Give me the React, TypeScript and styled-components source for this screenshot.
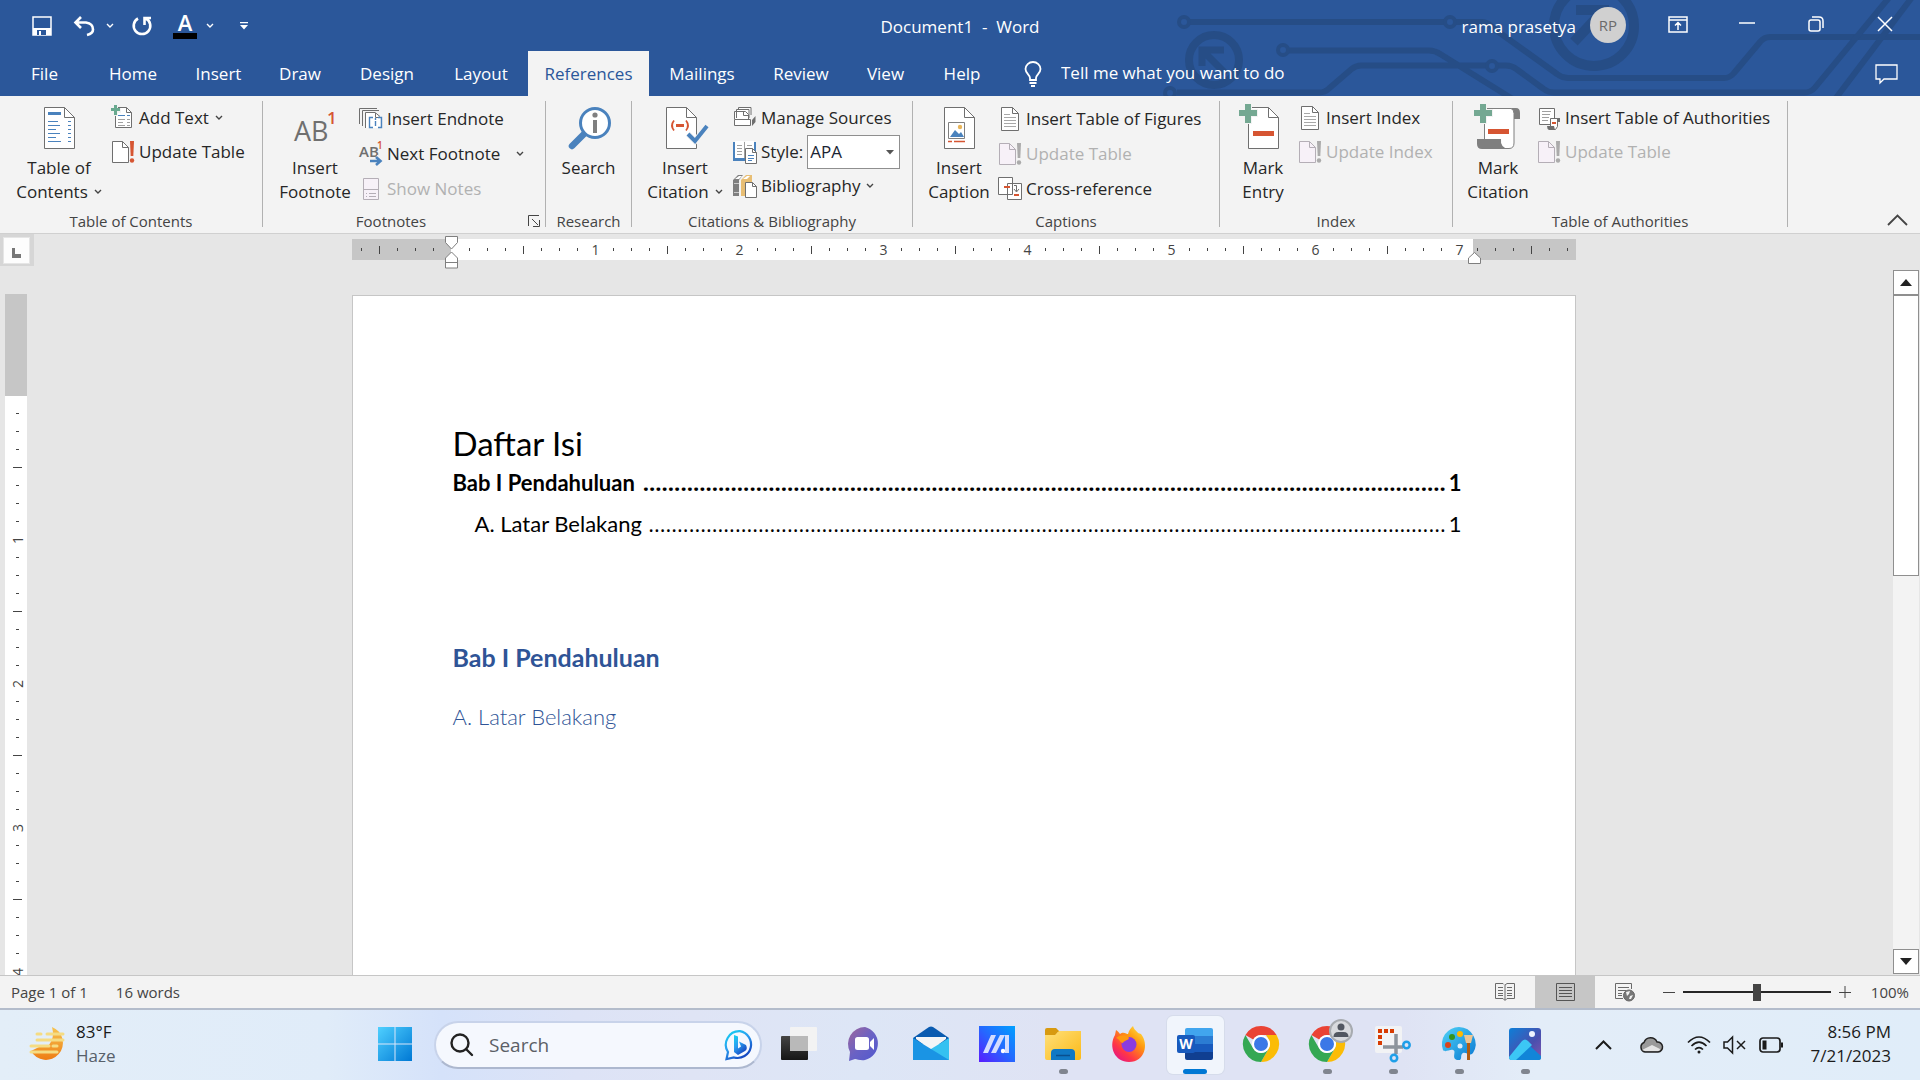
import React, { useState } from "react";
import styled, { createGlobalStyle } from "styled-components";

const UI = `"Open Sans", "Noto Sans", sans-serif`;
const DOC = `Lato, "Open Sans", sans-serif`;
const BLUE = "#2b579a";
const GREY = "#6f6f6f";
const ACCENT = "#4a82bd";
const RED = "#d65532";

const GlobalStyle = createGlobalStyle`
  * { box-sizing: border-box; }
  html, body, #root { height: 100%; }
  body { margin: 0; background: #e6e6e6; font-family: ${UI}; overflow: hidden; }
  button, input, select { font: inherit; color: inherit; }
  button { background: none; border: 0; padding: 0; margin: 0; }
  svg { display: block; overflow: visible; flex: none; }
`;

const Window = styled.div`
  display: flex;
  flex-direction: column;
  height: 100vh;
  min-height: 600px;
`;

/* ---------- header ---------- */
const Header = styled.header`
  position: relative;
  flex: none;
  overflow: hidden;
  background: ${BLUE};
  color: #fff;
  font-size: 17px;
`;
const Artwork = styled.svg`
  position: absolute;
  top: 0;
  right: 0;
  width: 760px;
  height: 96px;
`;
const TitleRow = styled.div`
  position: relative;
  display: grid;
  grid-template-columns: 1fr auto 1fr;
  height: 51px;
  line-height: 24px;
`;
const QuickAccess = styled.div`
  display: flex;
  align-items: center;
  padding-left: 32px;
`;
const QuickButton = styled.button<{ $gap?: number }>`
  margin-right: ${(p) => p.$gap ?? 0}px;
`;
const Title = styled.h1`
  margin: 0;
  padding-top: 15px;
  font-size: 17px;
  font-weight: 400;
  white-space: pre;
`;
const Account = styled.div`
  display: flex;
  justify-content: flex-end;
  align-items: flex-start;
  padding: 7px 0 0;
`;
const UserName = styled.span`
  padding-top: 8px;
`;
const Avatar = styled.span`
  width: 36px;
  height: 36px;
  margin: 0 17px 0 14px;
  border-radius: 50%;
  background: #d0d0d0;
  color: #6b6b6b;
  font-size: 15px;
  line-height: 36px;
  text-align: center;
`;
const CaptionButton = styled.button`
  display: grid;
  place-items: center;
  width: 69px;
  height: 34px;
  &:last-of-type { margin-right: 1px; }
`;
const TabRow = styled.nav`
  position: relative;
  display: flex;
  height: 45px;
`;
const Tab = styled.button<{ $width: number; $active?: boolean }>`
  width: ${(p) => p.$width}px;
  height: 45px;
  line-height: 45px;
  background: ${(p) => (p.$active ? "#f3f3f3" : "transparent")};
  color: ${(p) => (p.$active ? BLUE : "#fff")};
`;
const TellMe = styled.label`
  display: flex;
  align-items: center;
  gap: 19px;
  margin-left: 24px;
`;
const TellInput = styled.input`
  width: 260px;
  padding: 0 0 2px;
  border: 0;
  outline: 0;
  background: none;
  &::placeholder { color: #fff; opacity: 1; }
`;
const CommentButton = styled.button`
  margin-left: auto;
  padding-right: 22px;
`;

/* ---------- ribbon ---------- */
const RibbonBar = styled.div`
  display: flex;
  flex: none;
  height: 138px;
  background: #f3f3f3;
  border-bottom: 1px solid #d0d0d0;
  color: #262626;
  font-size: 17px;
  line-height: 24px;
`;
const Group = styled.section<{ $width: number }>`
  display: flex;
  flex-direction: column;
  width: ${(p) => p.$width}px;
  padding-top: 5px;
`;
const Divider = styled.div`
  width: 1px;
  margin: 5px 0 6px;
  background: #b1b1b1;
`;
const GroupBody = styled.div<{ $inset: number }>`
  display: flex;
  height: 108px;
  padding-left: ${(p) => p.$inset}px;
`;
const GroupFooter = styled.div`
  display: flex;
  align-items: center;
  height: 24px;
  color: #444;
  font-size: 15px;
  white-space: nowrap;
`;
const GroupTitle = styled.span`
  flex: 1;
  text-align: center;
`;
const Launcher = styled.button`
  width: 26px;
  padding-left: 9px;
`;
const LargeButton = styled.button<{ $width: number }>`
  display: flex;
  flex-direction: column;
  align-items: center;
  gap: 7px;
  width: ${(p) => p.$width}px;
  padding-top: 6px;
  text-align: center;
  white-space: nowrap;
`;
const LargeLabel = styled.span`
  display: flex;
  flex-direction: column;
  align-items: center;
`;
const WithArrow = styled.span`
  display: flex;
  align-items: center;
  gap: 6px;
`;
const Stack = styled.div<{ $row: number }>`
  display: grid;
  grid-auto-rows: ${(p) => p.$row}px;
  align-content: start;
`;
const SmallButton = styled.button<{ $arrowGap?: number }>`
  display: flex;
  align-items: center;
  gap: 4px;
  white-space: nowrap;
  &:disabled { color: #b1b1b1; }
  & > span + svg { margin-left: ${(p) => p.$arrowGap ?? 2}px; }
`;
const StyleField = styled.div`
  display: flex;
  align-items: center;
  gap: 4px;
`;
const SelectFrame = styled.span`
  position: relative;
  display: block;
  width: 93px;
  & > svg { position: absolute; right: 6px; top: 15px; pointer-events: none; }
`;
const StyleSelect = styled.select`
  width: 100%;
  height: 34px;
  padding: 0 2px;
  appearance: none;
  border: 1px solid #8f8f8f;
  border-radius: 0;
  background: #fff;
  color: #1a2433;
`;
const Collapse = styled.button`
  align-self: flex-end;
  margin-left: auto;
  padding: 0 12px 7px 0;
`;

/* ---------- workspace ---------- */
const Workspace = styled.main`
  display: flex;
  flex: 1;
  min-height: 0;
  background: #e6e6e6;
`;
const LeftRail = styled.div`
  display: flex;
  flex-direction: column;
  width: 34px;
  overflow: hidden;
`;
const TabStop = styled.button`
  display: grid;
  place-items: center;
  flex: none;
  height: 32px;
  padding: 2px 2px 2px 0;
  background: #d6d6d6;
`;
const TabStopFace = styled.span`
  display: grid;
  place-items: end center;
  width: 27px;
  height: 27px;
  padding-bottom: 5px;
  border: 1px solid #e6e6e6;
  background: #fdfdfd;
`;
const VRuler = styled.div`
  flex: none;
  width: 22px;
  margin: 28px 0 0 5px;
  padding-top: 111px;
  background: linear-gradient(#c6c6c6 102px, #fff 102px);
`;
const VCell = styled.div`
  display: flex;
  align-items: center;
  justify-content: center;
  width: 22px;
  height: 18px;
  padding-right: 3px;
  color: #444;
  font-size: 14px;
  line-height: 18px;
  writing-mode: vertical-rl;
  transform: rotate(180deg);
`;
const VMark = styled.i<{ $long?: boolean }>`
  width: ${(p) => (p.$long ? 9 : 3)}px;
  height: 1px;
  background: #444;
`;
const Canvas = styled.div`
  display: flex;
  flex: 1;
  flex-direction: column;
  align-items: center;
  min-width: 0;
  overflow: hidden;
`;
const HRuler = styled.div`
  position: relative;
  display: flex;
  flex: none;
  align-items: center;
  width: 1224px;
  height: 21px;
  margin-top: 5px;
  padding-left: 1px;
  background: linear-gradient(90deg, #c6c6c6 99px, #fff 99px, #fff 1121px, #c6c6c6 1121px);
`;
const HCell = styled.div`
  display: flex;
  flex: none;
  align-items: center;
  justify-content: center;
  width: 18px;
  height: 21px;
  color: #444;
  font-size: 14px;
`;
const HMark = styled.i<{ $long?: boolean }>`
  width: 1px;
  height: ${(p) => (p.$long ? 8 : 3)}px;
  background: #444;
`;
const Marker = styled.svg<{ $left: number; $top: number }>`
  position: absolute;
  left: ${(p) => p.$left}px;
  top: ${(p) => p.$top}px;
`;
const Page = styled.article`
  flex: 1;
  width: 1224px;
  margin-top: 35px;
  padding: 126px 113px 0 100px;
  border: 1px solid #c6c6c6;
  border-bottom: 0;
  background: #fff;
  color: #000;
  font-family: ${DOC};
  font-size: 22px;
`;
const TocTitle = styled.h2`
  margin: 0;
  font-size: 33px;
  font-weight: 400;
  line-height: 42px;
`;
const TocLine = styled.a<{ $level: number }>`
  display: flex;
  align-items: baseline;
  height: 37px;
  margin-bottom: 4px;
  padding-left: ${(p) => (p.$level - 1) * 22}px;
  color: inherit;
  font-weight: ${(p) => (p.$level === 1 ? 700 : 400)};
  line-height: 37px;
  text-decoration: none;
`;
const Leader = styled.span`
  margin: 0 3px 0 auto;
  font-family: ${UI};
  white-space: nowrap;
`;
const Heading = styled.h3<{ $level: number }>`
  margin: ${(p) => (p.$level === 1 ? "97px 0 0" : "24px 0 0")};
  color: #2f5496;
  font-size: ${(p) => (p.$level === 1 ? 25 : 22)}px;
  font-weight: ${(p) => (p.$level === 1 ? 700 : 300)};
  line-height: 36px;
`;
const Scrollbar = styled.div`
  display: flex;
  flex-direction: column;
  width: 27px;
  padding: 36px 1px 1px 0;
`;
const ScrollButton = styled.button`
  display: grid;
  place-items: center;
  height: 25px;
  border: 1px solid #8f8f8f;
  background: #fff;
`;
const Track = styled.div`
  flex: 1;
  background: #f3f3f3;
`;
const Thumb = styled.div`
  height: 43%;
  border: 1px solid #8f8f8f;
  background: #fff;
`;

/* ---------- status bar ---------- */
const StatusBar = styled.footer`
  display: flex;
  flex: none;
  align-items: stretch;
  height: 33px;
  border-top: 1px solid #c6c6c6;
  background: #f3f3f3;
  color: #444;
  font-size: 15px;
  line-height: 32px;
`;
const StatusText = styled.button`
  margin-left: 11px;
  & + & { margin-left: 28px; }
`;
const ViewButtons = styled.div`
  display: flex;
  margin-left: auto;
`;
const ViewButton = styled.button<{ $active?: boolean }>`
  display: grid;
  place-items: center;
  width: 60px;
  background: ${(p) => (p.$active ? "#c6c6c6" : "transparent")};
`;
const Zoom = styled.div`
  display: flex;
  align-items: center;
  gap: 8px;
  margin-left: 8px;
`;
const ZoomRange = styled.input`
  width: 148px;
  height: 18px;
  margin: 0;
  appearance: none;
  background: linear-gradient(#262626, #262626) center / 100% 2px no-repeat;
  &::-webkit-slider-thumb {
    appearance: none;
    width: 8px;
    height: 17px;
    background: #444;
  }
`;
const ZoomValue = styled.button`
  width: 69px;
  padding-right: 11px;
  text-align: right;
`;

/* ---------- taskbar ---------- */
const Taskbar = styled.footer`
  display: grid;
  grid-template-columns: 1fr auto 1fr;
  flex: none;
  height: 72px;
  border-top: 2px solid #b3bccb;
  background: linear-gradient(90deg, #e3eef8 0, #e0ecf9 17%, #d5e2fa 23%, #dde3f6 30%, #dfe4f5 36%, #dde6f6 45%, #dfe3f4 55%, #dfe3f4 73%, #e3edf8 80%, #e0edf9 100%);
  color: #1b1b1b;
  font-size: 17px;
  line-height: 24px;
`;
const Weather = styled.button`
  display: flex;
  align-items: center;
  justify-self: start;
  gap: 11px;
  padding: 0 0 2px 29px;
  text-align: left;
`;
const Muted = styled.span`
  display: block;
  color: #57606a;
`;
const Apps = styled.div`
  display: flex;
  align-items: center;
`;
const AppSlot = styled.button`
  display: flex;
  justify-content: center;
  width: 66px;
  height: 70px;
  padding-top: 6px;
`;
const AppTile = styled.span<{ $active?: boolean }>`
  display: flex;
  flex-direction: column;
  align-items: center;
  justify-content: space-between;
  width: 57px;
  height: 58px;
  padding-top: 10px;
  border-radius: 6px;
  background: ${(p) => (p.$active ? "#f1f5fc" : "transparent")};
  box-shadow: ${(p) => (p.$active ? "0 0 0 1px #d6dceb" : "none")};
`;
const Indicator = styled.i<{ $state?: "open" | "active" }>`
  width: ${(p) => (p.$state === "active" ? 24 : 9)}px;
  height: 5px;
  border-radius: 3px;
  background: ${(p) => (p.$state === "active" ? "#0078d4" : p.$state ? "#80858f" : "transparent")};
`;
const SearchPill = styled.label`
  display: flex;
  align-items: center;
  width: 328px;
  height: 48px;
  margin: 0 4px 0 6px;
  padding: 0 5px 0 14px;
  border: 2px solid #c8d3ea;
  border-bottom-color: #adb8cf;
  border-radius: 24px;
  background: #f5f8fe;
`;
const SearchInput = styled.input`
  flex: 1;
  min-width: 0;
  padding: 0 16px 1px;
  border: 0;
  outline: 0;
  background: none;
  font-size: 19px;
  &::placeholder { color: #5c5f66; opacity: 1; }
`;
const Tray = styled.div`
  display: flex;
  align-items: center;
  justify-content: flex-end;
  padding-right: 29px;
`;
const TrayButton = styled.button<{ $gap: number }>`
  margin-right: ${(p) => p.$gap}px;
`;
const Clock = styled.button`
  width: 108px;
  padding-bottom: 2px;
  text-align: right;
`;

/* ---------- icons ---------- */
const Chevron = ({ color = "#444" }: { color?: string }) => (
  <svg width="8" height="6" viewBox="0 0 8 6" fill="none" stroke={color} strokeWidth="1.4">
    <path d="M1 1l3 3 3-3" />
  </svg>
);

const Large = ({ children }: { children: React.ReactNode }) => (
  <svg width="48" height="42" viewBox="0 0 48 42" fill="none" aria-hidden="true">{children}</svg>
);
const Small = ({ children }: { children: React.ReactNode }) => (
  <svg width="24" height="24" viewBox="0 0 24 24" fill="none" aria-hidden="true">{children}</svg>
);
const Sheet = ({ x, y, w, h, fold, stroke = GREY, fill = "#fff" }: {
  x: number; y: number; w: number; h: number; fold: number; stroke?: string; fill?: string;
}) => (
  <g stroke={stroke} strokeWidth="1">
    <path fill={fill} d={`M${x} ${y}h${w - fold}l${fold} ${fold}v${h - fold}h${-w}z`} />
    <path d={`M${x + w - fold} ${y}v${fold}h${fold}`} />
  </g>
);

const TocIcon = () => (
  <Large>
    <Sheet x={9.5} y={0.5} w={30} h={41} fold={10} />
    <path fill={ACCENT} d="M13 5h13v3H13z" />
    <path stroke={ACCENT} d="M13 14.5h10M13 18.5h12M13 22.5h8M13 26.5h12M13 30.5h8M13 34.5h13M33 14.5h3M33 18.5h3M33 22.5h3M33 26.5h3M33 30.5h3M33 34.5h3" />
  </Large>
);
const InsertFootnoteIcon = () => (
  <Large>
    <text x="3" y="34" fill={GREY} fontSize="27" fontFamily={UI} fontWeight="500">AB</text>
    <text x="36" y="17" fill={RED} fontSize="17" fontFamily={UI} fontWeight="600">1</text>
  </Large>
);
const ResearchIcon = () => (
  <Large>
    <path d="M20 26L7 39" stroke={ACCENT} strokeWidth="6.5" strokeLinecap="round" />
    <circle cx="30" cy="16" r="14.5" fill="#fff" stroke={ACCENT} strokeWidth="3" />
    <circle cx="30" cy="8" r="2.6" fill="#7f7f7f" />
    <path fill="#7f7f7f" d="M28 13h4v13h-4z" />
  </Large>
);
const CitationIcon = () => (
  <Large>
    <Sheet x={5.5} y={0.5} w={30} h={41} fold={10} />
    <path d="M13 13.5q-4 5 0 10M25 13.5q4 5 0 10" stroke={RED} strokeWidth="1.8" />
    <path fill={RED} d="M15 17h8v3h-8z" />
    <path d="M27 27l7 7 12-15" stroke="#f3f3f3" strokeWidth="6" />
    <path d="M27 27l7 7 12-15" stroke={ACCENT} strokeWidth="4" />
  </Large>
);
const CaptionIcon = () => (
  <Large>
    <Sheet x={9.5} y={0.5} w={30} h={41} fold={10} />
    <path fill="#fff" stroke="#7f7f7f" d="M13.500 15.500h16v16h-16z" />
    <circle cx="25" cy="20" r="2.200" fill="#e8b55a" />
    <path fill={ACCENT} d="M15 30l5-7 4 4 2-2 3 5z" />
    <path stroke={RED} d="M13 34.500h4M19 34.500h11" strokeWidth="1.500" />
  </Large>
);
const GreenPlus = () => <path fill="#74a892" d="M6-3h6v6h6v6h-6v7H6V9H0V3h6z" />;
const MarkEntryIcon = () => (
  <Large>
    <Sheet x={9.5} y={0.5} w={30} h={41} fold={10} />
    <path fill="#f3f3f3" d="M5-4h8v6h6v8h-6v7H5z" />
    <GreenPlus />
    <path fill={RED} d="M14 24h21v5H14z" />
  </Large>
);
const MarkCitationIcon = () => (
  <Large>
    <path fill="#7f7f7f" d="M36 1h6q4 0 4 5v6h-7V7q0-4-3-6z" />
    <path fill="#fff" stroke="#7f7f7f" d="M10.500 40V1.500H37q3 1 3 5V36q0 5.500-5 5.500H12" />
    <path fill="#7f7f7f" d="M3 32h24q-1 8 7 10H8q-5 0-5-5z" />
    <path fill="#f3f3f3" d="M5-4h8v6h6v8h-6v7H5z" />
    <GreenPlus />
    <path fill={RED} d="M14 22h21v5H14z" />
  </Large>
);
const AddTextIcon = () => (
  <Small>
    <Sheet x={4.500} y={1.500} w={16} h={20} fold={5} />
    <path stroke={ACCENT} d="M7 9.500h7M16 9.500h3" />
    <path stroke="#a0a0a0" d="M7 13.500h7M16 13.500h3M7 16.500h5M16 16.500h3M7 19.500h7M16 19.500h3" />
    <path fill="#f3f3f3" d="M2-1h5v3h3v5H7v3H2z" />
    <path fill="#68a98f" d="M3-1h3v3h3v3H6v4H3V5H0V2h3z" />
  </Small>
);
const UpdateIcon = ({ off }: { off?: boolean }) => (
  <Small>
    <Sheet x={1.500} y={1.500} w={16} h={21} fold={6} stroke={off ? "#b4aeb6" : GREY} fill={off ? "#f7f1f8" : "#fff"} />
    <path fill={off ? "#ababab" : RED} d="M19 1h4l-.7 15h-2.600z" />
    <circle cx="21" cy="20.500" r="2.200" fill={off ? "#ababab" : RED} />
  </Small>
);
const EndnoteIcon = () => (
  <Small>
    <path stroke={GREY} d="M.500 17V1.500H18M3.500 19V3.500H20M6.500 21V5.500H16l5 4" />
    <path fill="#fff" d="M7 6h9l5 5v10H7z" />
    <path stroke={GREY} d="M16.500 6v4.500H21" />
    <path stroke={ACCENT} strokeWidth="1.400" d="M14 10.500h-3.500v10H14M19 10.500h3.500v10H19M16.500 11v2M16.500 14v5" />
  </Small>
);
const NextFootnoteIcon = () => (
  <Small>
    <text x="0" y="15" fill={GREY} fontSize="15" fontFamily={UI} fontWeight="600">AB</text>
    <text x="18" y="7" fill={RED} fontSize="10" fontFamily={UI} fontWeight="600">1</text>
    <path d="M11 19h10M17 14.500l5 4.500-5 4.500" stroke="#f3f3f3" strokeWidth="5" />
    <path d="M11 19h10M17 15l4.500 4-4.500 4" stroke={ACCENT} strokeWidth="2.600" />
  </Small>
);
const ShowNotesIcon = () => (
  <Small>
    <path fill="#f7f1f8" stroke="#b4aeb6" d="M4.500 1.500h15v21h-15zM4.500 12.500h15" />
    <path stroke="#b4aeb6" d="M7 16.500h1M10 16.500h7M7 19.500h1M10 19.500h7" />
  </Small>
);
const SourcesIcon = () => (
  <Small>
    <path fill="#fff" stroke={GREY} d="M5.500 9V1.500H18V9" />
    <path fill="#fff" stroke={GREY} d="M3.500 12V3.500H16V12M1.500 13V5.500h11l3 3V13M10.500 5.500v4h5" />
    <path fill="#fff" stroke={GREY} d="M1.500 13.500h16v6h-16z" />
    <path fill={GREY} d="M19 14l3.500-4v6L19 20z" />
  </Small>
);
const StyleIcon = () => (
  <Small>
    <path fill={ACCENT} d="M0 2h23v19H0z" />
    <path fill="#fff" d="M2 1h8l1.500 1L13 1h8v17H2z" />
    <path stroke="#a0a0a0" d="M4 5.500h5M4 8.500h5M4 11.500h5M4 14.500h5M14 5.500h5M11.500 2v16" />
    <Sheet x={12.500} y={8.500} w={11} h={15} fold={4} />
    <path stroke={ACCENT} d="M15 15.500h6M15 18.500h6M15 20.500h4" />
  </Small>
);
const BibliographyIcon = () => (
  <Small>
    <path fill="#7f7f7f" d="M0 6l5-5h5L6 6v16H0z" />
    <path fill="#fff" d="M2 5l4-3h3L6 5z" />
    <path fill="#e8be74" d="M8 6l5-5h6v21H8z" />
    <path fill="#fff" d="M10 5l4-3h3l-3 3z" />
    <path stroke="#c9c9c9" d="M1 9.500h5M1 18.500h5" />
    <Sheet x={12.500} y={8.500} w={11} h={15} fold={4} />
  </Small>
);
const LinesIcon = () => (
  <Small>
    <Sheet x={3.500} y={0.500} w={17} h={23} fold={6} />
    <path stroke="#a8a8a8" d="M6 7.500h6M6 10.500h12M6 13.500h12M6 16.500h12M6 19.500h12" />
  </Small>
);
const CrossIcon = () => (
  <Small>
    <path fill="#fff" stroke={GREY} d="M9.500 6.500h14v16h-14zM.500.500h14v17H.500z" />
    <path fill={RED} d="M6 9h6v2H6zM16 17h5v2h-5z" />
    <path stroke={GREY} d="M16 8.500h2.500v6M16 12l2.500 3 2.500-3" />
  </Small>
);
const AuthoritiesIcon = () => (
  <Small>
    <path fill="#fff" stroke={GREY} d="M2.500 2.500h15v16h-15z" />
    <path stroke="#a0a0a0" d="M5 5.500h9M5 8.500h8M5 11.500h7M5 14.500h6" />
    <path fill="#fff" stroke={GREY} d="M13.500 12.500h7v8l-2 3h-5z" />
    <path fill={GREY} d="M20 12h3v4h-2zM10 20h7l1 4h-6q-2-1-2-4z" />
    <path fill={RED} d="M15 16h4v2h-4z" />
  </Small>
);

const ChromeMark = ({ size = 36, badge = false }) => (
  <svg width={size} height="36" viewBox="0 0 36 36">
    <path fill="#ea4335" d="M18 0a18 18 0 0 1 15.600 9H18a9 9 0 0 0-7.800 4.500L2.400 9A18 18 0 0 1 18 0z" />
    <path fill="#fbbc05" d="M33.600 9A18 18 0 0 1 18 36l7.800-13.500A9 9 0 0 0 25.800 13.500L23 9z" />
    <path fill="#34a853" d="M2.400 9A18 18 0 0 0 18 36l7.800-13.500a9 9 0 0 1-15.600 0z" />
    <circle cx="18" cy="18" r="9" fill="#fff" />
    <circle cx="18" cy="18" r="7" fill="#3b78e7" />
    {badge && (
      <g>
        <circle cx="32" cy="5" r="11" fill="#d8dade" stroke="#a7abb0" strokeWidth="2" />
        <circle cx="32" cy="1" r="3.500" fill="#525761" />
        <path fill="#525761" d="M24.500 11q0-5 5-5h5q5 0 5 5z" />
      </g>
    )}
  </svg>
);

const appIcons: Record<string, React.ReactNode> = {
  Start: (
    <svg width="36" height="36" viewBox="0 0 36 36">
      <defs><linearGradient id="win" x1="0" y1="0" x2="1" y2="1" gradientUnits="objectBoundingBox"><stop stopColor="#4fd0ff" /><stop offset="1" stopColor="#0078d4" /></linearGradient></defs>
      <path fill="url(#win)" d="M1 1h16.500v16.500H1zM18.500 1H35v16.500H18.500zM1 18.500h16.500V35H1zM18.500 18.500H35V35H18.500z" />
    </svg>
  ),
  "Task view": (
    <svg width="36" height="36" viewBox="0 0 36 36">
      <defs><linearGradient id="tv" x2="0" y2="1"><stop stopColor="#444" /><stop offset="1" stopColor="#161616" /></linearGradient></defs>
      <rect x="0" y="10" width="27" height="24" rx="1" fill="url(#tv)" />
      <rect x="9" y="1" width="27" height="24" rx="1" fill="#f3f3f3" />
      <path fill="#b9b9b9" d="M9 10h18v15H9z" />
    </svg>
  ),
  Chat: (
    <svg width="36" height="36" viewBox="0 0 36 36">
      <defs><linearGradient id="chat" x1="0" y1="0" x2="1" y2="1"><stop stopColor="#a0679b" /><stop offset=".5" stopColor="#6a62c4" /><stop offset="1" stopColor="#5058cf" /></linearGradient></defs>
      <path fill="url(#chat)" d="M18 1a17 17 0 0 1 0 33c-4 1-8-1-10-1l-6 2 1-9A17 17 0 0 1 18 1z" />
      <rect x="8" y="11" width="14" height="13" rx="2.500" fill="#fff" />
      <path fill="#fff" d="M23 16l4-4v12l-4-4z" />
    </svg>
  ),
  Mail: (
    <svg width="36" height="36" viewBox="0 0 36 36">
      <path fill="#0a5bb0" d="M0 12L16 1q2-1 4 0l16 11v6H0z" />
      <path fill="#f3f5f7" d="M3 11h30v2L18 24 3 13z" />
      <path fill="#35c1f1" d="M36 12v22H10l8-11z" />
      <path fill="#1a94e4" d="M0 12l18 11 18 11H0z" />
    </svg>
  ),
  MyAsus: (
    <svg width="36" height="36" viewBox="0 0 36 36">
      <defs><linearGradient id="asus" x1="0" y1="1" x2="1" y2="0"><stop stopColor="#5a1bff" /><stop offset=".5" stopColor="#2568ff" /><stop offset="1" stopColor="#00a0ff" /></linearGradient></defs>
      <path fill="url(#asus)" d="M0 0h36v36H0z" />
      <path fill="#d3dcff" d="M12 9h5L9 27H4zM21 9h5l-9 18h-5zM26 9h4v18h-4z" />
      <circle cx="24" cy="25" r="2.200" fill="#fff" />
    </svg>
  ),
  "File Explorer": (
    <svg width="36" height="36" viewBox="0 0 36 36">
      <defs><linearGradient id="fold" x2="1" y2="1"><stop stopColor="#ffe07a" /><stop offset="1" stopColor="#fbb917" /></linearGradient></defs>
      <path fill="#d89a10" d="M0 4q0-2 2-2h9l4 4h-2l-3 4H0z" />
      <path fill="url(#fold)" d="M0 9h10l4-4h22v27q0 2-2 2H2q-2 0-2-2z" />
      <path fill="#0f78c4" d="M6 34v-7q0-4 4-4h16q4 0 4 4v7z" />
      <path stroke="#0a4f8e" strokeWidth="1.500" d="M11 29.500h14" />
    </svg>
  ),
  Firefox: (
    <svg width="36" height="36" viewBox="0 0 36 36">
      <defs><linearGradient id="fx" x1="1" y1="0" x2=".2" y2="1"><stop stopColor="#fff44f" /><stop offset=".4" stopColor="#ff980e" /><stop offset=".75" stopColor="#ff3647" /><stop offset="1" stopColor="#e31587" /></linearGradient></defs>
      <path fill="url(#fx)" d="M22 0c1 4 4 5 5 7l3 1c8 10 4 28-12 28C4 36-3 21 4 9l1-5c2 1 3 3 4 4C12 5 16 8 17 8c1-4 3-6 5-8z" />
      <circle cx="18" cy="18.500" r="7.500" fill="#8a3be0" />
      <path fill="#ff980e" d="M5 12c5-4 11-3 13 0-1 3-5 2-6 5-3 0-3-4-7-5z" />
    </svg>
  ),
  Word: (
    <svg width="36" height="36" viewBox="0 0 36 36">
      <path fill="#41a5ee" d="M10 2h24q2 0 2 2v6H8V4q0-2 2-2z" />
      <path fill="#2b7cd3" d="M8 10h28v8H8z" />
      <path fill="#185abd" d="M8 18h28v8H8z" />
      <path fill="#103f91" d="M8 26h28v6q0 2-2 2H10q-2 0-2-2z" />
      <rect x="0" y="9" width="18" height="18" rx="2" fill="#185abd" />
      <text x="9" y="23" textAnchor="middle" fill="#fff" fontFamily={UI} fontSize="14" fontWeight="700">W</text>
    </svg>
  ),
  Chrome: <ChromeMark />,
  "Chrome profile": <ChromeMark badge />,
  "Snipping Tool": (
    <svg width="36" height="36" viewBox="0 0 36 36" fill="none">
      <rect x="0" y="0" width="27" height="27" rx="2" fill="#f2f3f5" />
      <path stroke="#d83b01" strokeWidth="4" strokeDasharray="4 2" d="M3 5h16M5 9v12" />
      <path stroke="#8d949c" strokeWidth="3.500" d="M21 8v20M8 21h20" />
      <circle cx="31.500" cy="19" r="3.200" stroke="#1f9fe8" strokeWidth="2.500" />
      <circle cx="19" cy="32" r="3.200" stroke="#1f9fe8" strokeWidth="2.500" />
    </svg>
  ),
  Paint: (
    <svg width="36" height="36" viewBox="0 0 36 36">
      <defs><linearGradient id="pt" x2="1" y2="1"><stop stopColor="#50d3f7" /><stop offset="1" stopColor="#0a78d2" /></linearGradient></defs>
      <path fill="url(#pt)" d="M18 1a17 17 0 0 1 14 26c-4 4-6-1-10 0-4 2 1 8-6 7C10 32 16 25 12 24c-3-1-8 3-10 0A17 17 0 0 1 18 1z" />
      <circle cx="19" cy="8" r="3" fill="#ffb900" /><circle cx="11" cy="11" r="3" fill="#33951f" /><circle cx="7" cy="19" r="3" fill="#d8441c" /><circle cx="19" cy="20" r="2.500" fill="#dcecf9" />
      <path fill="#ecc594" d="M23 9h9l-2 8h-5z" /><path fill="#b05c13" d="M26 17h3v17h-3z" />
    </svg>
  ),
  Photos: (
    <svg width="36" height="36" viewBox="0 0 36 36">
      <defs><linearGradient id="ph" x2="1" y2="1"><stop stopColor="#0d7fd8" /><stop offset=".6" stopColor="#4a4fae" /><stop offset="1" stopColor="#8055b0" /></linearGradient></defs>
      <rect x="2" y="2" width="32" height="32" rx="3" fill="url(#ph)" />
      <path fill="#1185d8" d="M6 34l16-15 12 11v2q0 2-2 2z" />
      <path fill="#3cc7f5" d="M2 31l13-16q3-3 6 0l4 4L9 34H4q-2 0-2-3z" />
      <circle cx="25" cy="8" r="3" fill="#eef3ff" />
    </svg>
  ),
};

/* ---------- parts ---------- */
const Item = ({ icon, label, off, arrow, arrowGap }: {
  icon: React.ReactNode; label: string; off?: boolean; arrow?: boolean; arrowGap?: number;
}) => (
  <SmallButton disabled={off} $arrowGap={arrowGap}>
    {icon}<span>{label}</span>{arrow && <Chevron />}
  </SmallButton>
);
const Big = ({ icon, lines, arrow, width }: {
  icon: React.ReactNode; lines: string[]; arrow?: boolean; width: number;
}) => (
  <LargeButton $width={width}>
    {icon}
    <LargeLabel>
      {lines.map((line, i) =>
        arrow && i === lines.length - 1
          ? <WithArrow key={line}>{line}<Chevron /></WithArrow>
          : <span key={line}>{line}</span>
      )}
    </LargeLabel>
  </LargeButton>
);
const RibbonGroup = ({ title, width, inset, launcher, children }: {
  title: string; width: number; inset: number; launcher?: boolean; children: React.ReactNode;
}) => (
  <>
    <Group $width={width} aria-label={title}>
      <GroupBody $inset={inset}>{children}</GroupBody>
      <GroupFooter>
        <GroupTitle>{title}</GroupTitle>
        {launcher && (
          <Launcher aria-label="Footnote and endnote options">
            <svg width="12" height="12" viewBox="0 0 12 12" fill="none" stroke="#444"><path d="M.500 11V.500H11M4 4l6 6M11.500 5v6.500H5" /></svg>
          </Launcher>
        )}
      </GroupFooter>
    </Group>
    <Divider />
  </>
);

const tabs: [string, number][] = [
  ["File", 89], ["Home", 88], ["Insert", 83], ["Draw", 80], ["Design", 94], ["Layout", 94],
  ["References", 121], ["Mailings", 106], ["Review", 92], ["View", 77], ["Help", 76],
];

const rulerCells = Array.from({ length: 68 }, (_, i) => i - 5);
const verticalCells = Array.from({ length: 32 }, (_, i) => i + 1);

const apps: [string, ("open" | "active")?][] = [
  ["Task view"], ["Chat"], ["Mail"], ["MyAsus"], ["File Explorer", "open"], ["Firefox"],
  ["Word", "active"], ["Chrome"], ["Chrome profile", "open"], ["Snipping Tool", "open"],
  ["Paint", "open"], ["Photos", "open"],
];
const AppButton = ({ name, state }: { name: string; state?: "open" | "active" }) => (
  <AppSlot aria-label={name}>
    <AppTile $active={state === "active"}>{appIcons[name]}<Indicator $state={state} /></AppTile>
  </AppSlot>
);

const HeaderArt = () => (
  <Artwork viewBox="0 0 760 96" fill="none" stroke="#264d86" strokeWidth="6" aria-hidden="true">
    <path d="M30 22h254M296 22h26q6 0 11 6l64 46q5 4 11 4h156q6 0 10-5l26-31q4-5 10-5h164" />
    <path d="M129 50.500h140q6 0 12 4l74 46M17 92.500h142q6 0 10-4l22-19q5-4 10-4h125M338 65.500h8q6 0 11 4l26 19q5 4 11 4h250q7 0 11-5L732-6M676 98L756-8" />
    <circle cx="24" cy="22" r="5" strokeWidth="4" /><circle cx="290" cy="22" r="5" strokeWidth="4" />
    <circle cx="123" cy="50" r="5" strokeWidth="4" /><circle cx="10" cy="93" r="5" strokeWidth="4" />
    <circle cx="332" cy="66" r="5" strokeWidth="4" />
    <circle cx="54" cy="60" r="25" strokeWidth="8" />
    <path d="M42 66V50h22M44 52l22 22" strokeWidth="7" />
    <circle cx="434" cy="26" r="40" strokeWidth="10" />
    <path d="M416 10h28v26M442 12l-28 30" strokeWidth="10" />
  </Artwork>
);

export default function App() {
  const [zoom, setZoom] = useState(100);
  const [citationStyle, setCitationStyle] = useState("APA");
  return (
    <>
      <GlobalStyle />
      <Window>
        <Header>
          <HeaderArt />
          <TitleRow>
            <QuickAccess>
              <QuickButton $gap={21} aria-label="Save">
                <svg width="20" height="20" viewBox="0 0 20 20"><path fill="none" stroke="#fff" strokeWidth="1.500" d="M1 1h18v18H1z" /><path fill="#fff" d="M1 12h18v7H1z" /><path fill={BLUE} d="M5 14h9v5H5z" /><path fill="#fff" d="M7 15h2v4H7z" /></svg>
              </QuickButton>
              <QuickButton $gap={11} aria-label="Undo">
                <svg width="22" height="20" viewBox="0 0 22 20" fill="none" stroke="#fff" strokeWidth="2.600"><path d="M8 1L2.500 6.500 8 12M3 6.500h10q7 1 7 7 0 4-6 5.500" /></svg>
              </QuickButton>
              <QuickButton $gap={17} aria-label="Undo history"><Chevron color="#fff" /></QuickButton>
              <QuickButton $gap={20} aria-label="Repeat">
                <svg width="22" height="20" viewBox="0 0 22 20" fill="none" stroke="#fff" strokeWidth="2.600"><path d="M7 2.500A8.300 8.300 0 1 0 15 2.500M13.500 9V2H20" /></svg>
              </QuickButton>
              <QuickButton $gap={9} aria-label="Font color">
                <svg width="24" height="24" viewBox="0 0 24 24"><text x="12" y="17" textAnchor="middle" fill="#fff" fontFamily={UI} fontSize="22" fontWeight="600">A</text><path d="M0 19h24v6H0z" /></svg>
              </QuickButton>
              <QuickButton $gap={26} aria-label="Font color list"><Chevron color="#fff" /></QuickButton>
              <QuickButton aria-label="Customize Quick Access Toolbar">
                <svg width="8" height="8" viewBox="0 0 8 8" fill="#fff"><path d="M0 0h8v1.300H0zM0 3h8L4 7.500z" /></svg>
              </QuickButton>
            </QuickAccess>
            <Title>{"Document1  -  Word"}</Title>
            <Account>
              <UserName>rama prasetya</UserName>
              <Avatar>RP</Avatar>
              <CaptionButton aria-label="Ribbon display options">
                <svg width="20" height="17" viewBox="0 0 20 17" fill="none" stroke="#fff" strokeWidth="1.500"><path d="M1 1h18v15H1zM1 4h18M10 14V7M7 9.500L10 6.500l3 3" /></svg>
              </CaptionButton>
              <CaptionButton aria-label="Minimize">
                <svg width="16" height="16" viewBox="0 0 16 16" stroke="#fff" strokeWidth="1.500"><path d="M0 7h16" /></svg>
              </CaptionButton>
              <CaptionButton aria-label="Restore">
                <svg width="16" height="16" viewBox="0 0 16 16" fill="none" stroke="#fff" strokeWidth="1.500"><rect x="1" y="4" width="11" height="11" rx="2" /><path d="M4 1h7q4 0 4 4v7" /></svg>
              </CaptionButton>
              <CaptionButton aria-label="Close">
                <svg width="16" height="16" viewBox="0 0 16 16" stroke="#fff" strokeWidth="1.500"><path d="M1 1l14 14M15 1L1 15" /></svg>
              </CaptionButton>
            </Account>
          </TitleRow>
          <TabRow>
            {tabs.map(([name, width]) => (
              <Tab key={name} $width={width} $active={name === "References"}>{name}</Tab>
            ))}
            <TellMe>
              <svg width="18" height="26" viewBox="0 0 18 26" fill="none" stroke="#fff" strokeWidth="1.800"><path d="M6 19v-2C6 14 1.500 12.500 1.500 8a7.500 7 0 0 1 15 0c0 4.500-4.500 6-4.500 9v2zM5.500 22h7M7 25h4" /></svg>
              <TellInput aria-label="Tell me what you want to do" placeholder="Tell me what you want to do" />
            </TellMe>
            <CommentButton aria-label="Comments">
              <svg width="23" height="20" viewBox="0 0 23 20" fill="none" stroke="#fff" strokeWidth="1.300"><path d="M1 1h21v14H9l-4 4v-4H1z" /></svg>
            </CommentButton>
          </TabRow>
        </Header>

        <RibbonBar>
          <RibbonGroup title="Table of Contents" width={262} inset={7}>
            <Big width={104} icon={<TocIcon />} lines={["Table of", "Contents"]} arrow />
            <Stack $row={34}>
              <Item icon={<AddTextIcon />} label="Add Text" arrow />
              <Item icon={<UpdateIcon />} label="Update Table" />
            </Stack>
          </RibbonGroup>
          <RibbonGroup title="Footnotes" width={282} inset={8} launcher>
            <Big width={88} icon={<InsertFootnoteIcon />} lines={["Insert", "Footnote"]} />
            <Stack $row={35}>
              <Item icon={<EndnoteIcon />} label="Insert Endnote" />
              <Item icon={<NextFootnoteIcon />} label="Next Footnote" arrow arrowGap={12} />
              <Item icon={<ShowNotesIcon />} label="Show Notes" off />
            </Stack>
          </RibbonGroup>
          <RibbonGroup title="Research" width={85} inset={0}>
            <Big width={85} icon={<ResearchIcon />} lines={["Search"]} />
          </RibbonGroup>
          <RibbonGroup title="Citations & Bibliography" width={280} inset={5}>
            <Big width={96} icon={<CitationIcon />} lines={["Insert", "Citation"]} arrow />
            <Stack $row={34}>
              <Item icon={<SourcesIcon />} label="Manage Sources" />
              <StyleField>
                <StyleIcon />
                <label htmlFor="citation-style">Style:</label>
                <SelectFrame>
                  <StyleSelect id="citation-style" value={citationStyle} onChange={(e) => setCitationStyle(e.target.value)}>
                    <option>APA</option><option>MLA</option><option>Chicago</option>
                  </StyleSelect>
                  <svg width="8" height="5" viewBox="0 0 8 5"><path fill="#555" d="M0 0h8L4 4.500z" /></svg>
                </SelectFrame>
              </StyleField>
              <Item icon={<BibliographyIcon />} label="Bibliography" arrow />
            </Stack>
          </RibbonGroup>
          <RibbonGroup title="Captions" width={306} inset={7}>
            <Big width={78} icon={<CaptionIcon />} lines={["Insert", "Caption"]} />
            <Stack $row={35}>
              <Item icon={<LinesIcon />} label="Insert Table of Figures" />
              <Item icon={<UpdateIcon off />} label="Update Table" off />
              <Item icon={<CrossIcon />} label="Cross-reference" />
            </Stack>
          </RibbonGroup>
          <RibbonGroup title="Index" width={232} inset={8}>
            <Big width={70} icon={<MarkEntryIcon />} lines={["Mark", "Entry"]} />
            <Stack $row={34}>
              <Item icon={<LinesIcon />} label="Insert Index" />
              <Item icon={<UpdateIcon off />} label="Update Index" off />
            </Stack>
          </RibbonGroup>
          <RibbonGroup title="Table of Authorities" width={334} inset={6}>
            <Big width={78} icon={<MarkCitationIcon />} lines={["Mark", "Citation"]} />
            <Stack $row={34}>
              <Item icon={<AuthoritiesIcon />} label="Insert Table of Authorities" />
              <Item icon={<UpdateIcon off />} label="Update Table" off />
            </Stack>
          </RibbonGroup>
          <Collapse aria-label="Collapse the ribbon">
            <svg width="21" height="12" viewBox="0 0 21 12" fill="none" stroke="#444" strokeWidth="1.800"><path d="M1 11l9.500-9.500L20 11" /></svg>
          </Collapse>
        </RibbonBar>

        <Workspace>
          <LeftRail>
            <TabStop aria-label="Tab stop type">
              <TabStopFace><svg width="10" height="10" viewBox="0 0 10 10"><path fill="#777" d="M1 0h3v6h6v4H1z" /></svg></TabStopFace>
            </TabStop>
            <VRuler>
              {verticalCells.map((n) => (
                <VCell key={n}>{n % 8 === 0 ? n / 8 : <VMark $long={n % 4 === 0} />}</VCell>
              ))}
            </VRuler>
          </LeftRail>
          <Canvas>
            <HRuler>
              {rulerCells.map((n) => (
                <HCell key={n}>
                  {n === 0 ? null : n > 0 && n % 8 === 0 ? n / 8 : <HMark $long={n % 4 === 0} />}
                </HCell>
              ))}
              <Marker $left={93} $top={-3} width="13" height="33" viewBox="0 0 13 33" fill="#fff" stroke="#7f7f7f">
                <path d="M.500.500h12v6l-6 6.500-6-6.500zM6.500 16l6 6v10H.500V22zM.500 26.500h12" />
              </Marker>
              <Marker $left={1116} $top={13} width="13" height="12" viewBox="0 0 13 12" fill="#fff" stroke="#7f7f7f">
                <path d="M6.500.500l6 5.500v5.500H.500V6z" />
              </Marker>
            </HRuler>
            <Page>
              <TocTitle>Daftar Isi</TocTitle>
              <TocLine href="#bab-1" $level={1}>
                <span>Bab I Pendahuluan</span><Leader aria-hidden="true">{".".repeat(128)}</Leader><span>1</span>
              </TocLine>
              <TocLine href="#latar-belakang" $level={2}>
                <span>A. Latar Belakang</span><Leader aria-hidden="true">{".".repeat(138)}</Leader><span>1</span>
              </TocLine>
              <Heading id="bab-1" $level={1}>Bab I Pendahuluan</Heading>
              <Heading id="latar-belakang" $level={2}>A. Latar Belakang</Heading>
            </Page>
          </Canvas>
          <Scrollbar>
            <ScrollButton aria-label="Scroll up"><svg width="12" height="7" viewBox="0 0 12 7"><path fill="#222" d="M6 0l6 7H0z" /></svg></ScrollButton>
            <Track><Thumb /></Track>
            <ScrollButton aria-label="Scroll down"><svg width="12" height="7" viewBox="0 0 12 7"><path fill="#222" d="M0 0h12L6 7z" /></svg></ScrollButton>
          </Scrollbar>
        </Workspace>

        <StatusBar>
          <StatusText>Page 1 of 1</StatusText>
          <StatusText>16 words</StatusText>
          <ViewButtons>
            <ViewButton aria-label="Read mode">
              <svg width="20" height="18" viewBox="0 0 20 18" fill="none" stroke="#6a6a6a"><path d="M9 1.500L8 .500H.500v15H8l2 2 2-2h7.500V.500H12l-2 1.500v15M3 4.500h5M3 7.500h5M3 10.500h5M3 12.500h5M12 4.500h5M12 7.500h5M12 10.500h5M12 12.500h5" /></svg>
            </ViewButton>
            <ViewButton $active aria-label="Print layout">
              <svg width="19" height="18" viewBox="0 0 19 18" fill="none" stroke="#555"><path d="M.500.500h18v17H.500zM3 4.500h13M3 7.500h13M3 10.500h13M3 13.500h13" /></svg>
            </ViewButton>
            <ViewButton aria-label="Web layout">
              <svg width="20" height="18" viewBox="0 0 20 18" fill="none" stroke="#6a6a6a"><path d="M8 15.500H.500V.500h16V6M3 4.500h11M3 7.500h8M3 10.500h4M3 12.500h4" /><circle cx="14" cy="12.500" r="5.500" fill="#777" /><path fill="#f3f3f3" stroke="none" d="M11 9l4-1-1 3-2 2zM15 13l3-1-2 4-2 0z" /></svg>
            </ViewButton>
          </ViewButtons>
          <Zoom>
            <button aria-label="Zoom out" onClick={() => setZoom(Math.max(10, zoom - 10))}><svg width="12" height="12" viewBox="0 0 12 12" stroke="#444"><path d="M0 6.500h12" /></svg></button>
            <ZoomRange type="range" min={0} max={200} value={zoom} onChange={(e) => setZoom(Number(e.target.value))} aria-label="Zoom" />
            <button aria-label="Zoom in" onClick={() => setZoom(Math.min(200, zoom + 10))}><svg width="12" height="12" viewBox="0 0 12 12" stroke="#444"><path d="M0 6.500h12M6 0v12" /></svg></button>
          </Zoom>
          <ZoomValue>{zoom}%</ZoomValue>
        </StatusBar>

        <Taskbar>
          <Weather>
            <svg width="36" height="34" viewBox="0 0 36 34" fill="none">
              <defs><linearGradient id="sun" x2="0" y2="1"><stop stopColor="#f6c552" /><stop offset="1" stopColor="#ee7d14" /></linearGradient></defs>
              <path fill="url(#sun)" d="M23 0a17 17 0 1 1-21 24l8-4 10-2q6-8 3-18z" />
              <path stroke="#f5dc83" strokeWidth="3" strokeLinecap="round" d="M8 7h4M18 7h16M8 13h26M2 19h18M24 19h4M2 25h26" />
            </svg>
            <span>83°F<Muted>Haze</Muted></span>
          </Weather>
          <Apps>
            <AppButton name="Start" />
            <SearchPill>
              <svg width="23" height="24" viewBox="0 0 23 24" fill="none" stroke="#222" strokeWidth="2.400"><circle cx="10" cy="10" r="8.500" /><path d="M16 16l6 6" strokeLinecap="round" /></svg>
              <SearchInput placeholder="Search" aria-label="Search" />
              <svg width="30" height="30" viewBox="0 0 30 30" fill="none">
                <defs><linearGradient id="bing" x1="0" y1="0" x2=".6" y2="1"><stop stopColor="#14d4f0" /><stop offset=".5" stopColor="#2a9df0" /><stop offset="1" stopColor="#1546c0" /></linearGradient></defs>
                <path stroke="url(#bing)" strokeWidth="2.200" d="M15 1.200A13.500 13.500 0 1 1 9 27.500L1.500 29 3 22A13.500 13.500 0 0 1 15 1.200z" />
                <path fill="url(#bing)" d="M9 5l4 1.500v12l3-2-2-5 7 3.500q2 4-1 6l-7 4-4-3z" />
              </svg>
            </SearchPill>
            {apps.map(([name, state]) => <AppButton key={name} name={name} state={state} />)}
          </Apps>
          <Tray>
            <TrayButton $gap={27} aria-label="Show hidden icons"><svg width="17" height="10" viewBox="0 0 17 10" fill="none" stroke="#1b1b1b" strokeWidth="2"><path d="M1 9l7.500-7.500L16 9" /></svg></TrayButton>
            <TrayButton $gap={24} aria-label="OneDrive">
              <svg width="24" height="16" viewBox="0 0 24 16"><path fill="#9a9a9a" stroke="#222" strokeWidth="1.500" d="M6 15a5 5 0 0 1-1-9.500A7 7 0 0 1 18 5a5 5 0 0 1 1 10z" /><path fill="#e4e4e4" d="M3 13l10-5 8 4q0 2-3 2H6z" /></svg>
            </TrayButton>
            <TrayButton $gap={12} aria-label="Wi-Fi">
              <svg width="24" height="18" viewBox="0 0 24 18" fill="none" stroke="#1b1b1b" strokeWidth="1.700"><path d="M1 6.500q11-11 22 0M4.500 10q7.500-7.500 15 0M8 13.500q4-4 8 0" /><circle cx="12" cy="16" r="1.500" fill="#1b1b1b" stroke="none" /></svg>
            </TrayButton>
            <TrayButton $gap={12} aria-label="Volume muted">
              <svg width="24" height="18" viewBox="0 0 24 18" fill="none" stroke="#1b1b1b" strokeWidth="1.500"><path d="M1 6h3.500L9.500 1v16L4.500 12H1zM14 5l8 8M22 5l-8 8" /></svg>
            </TrayButton>
            <TrayButton $gap={0} aria-label="Battery">
              <svg width="24" height="16" viewBox="0 0 24 16" fill="none" stroke="#1b1b1b" strokeWidth="1.700"><rect x="1" y="1" width="20" height="14" rx="3" /><rect x="3.500" y="3.500" width="4" height="9" fill="#1b1b1b" stroke="none" /><path d="M23 5.500v5" strokeWidth="2" /></svg>
            </TrayButton>
            <Clock>8:56 PM<br />7/21/2023</Clock>
          </Tray>
        </Taskbar>
      </Window>
    </>
  );
}
